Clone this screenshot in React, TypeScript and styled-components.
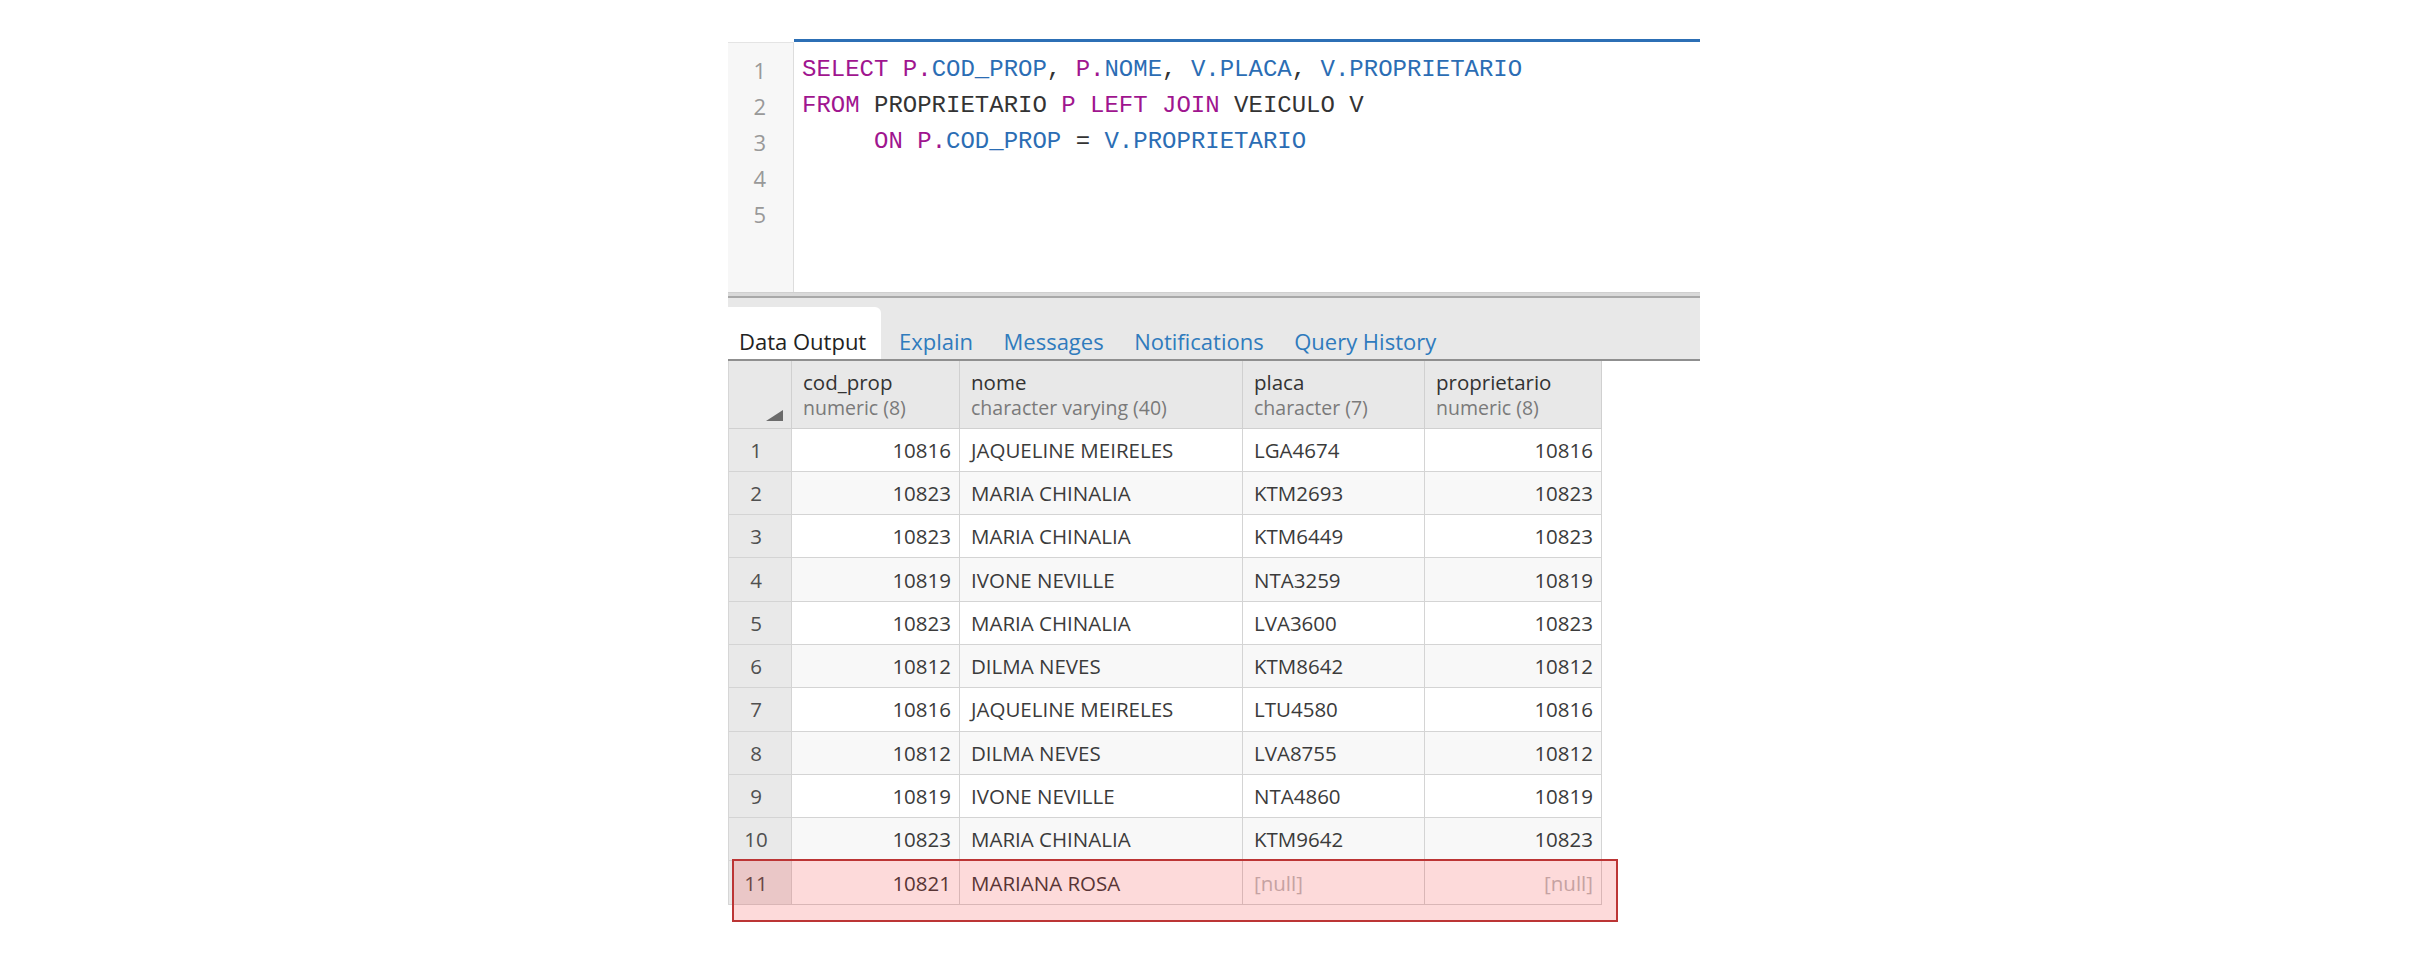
import { FC } from 'react';
import styled, { createGlobalStyle } from 'styled-components';

const GlobalStyle = createGlobalStyle`
  html, body {
    margin: 0;
    padding: 0;
    background: #ffffff;
  }
  body {
    min-height: 964px;
    font-family: 'Open Sans', 'Liberation Sans', sans-serif;
    color: #333333;
  }
`;

const Page = styled.div`
  width: 972px;
  margin: 0 auto;
  padding-top: 39px;
  display: flex;
  flex-direction: column;
`;

const Editor = styled.div`
  display: flex;
  height: 253px;
  background: #ffffff;
`;

const Gutter = styled.div`
  width: 66px;
  margin-top: 3px;
  background: #f7f7f7;
  border-top: 1px solid #e4e4e4;
  border-right: 1px solid #dddddd;
  padding: 9px 27px 0 0;
  box-sizing: border-box;
  display: flex;
  flex-direction: column;
  align-items: flex-end;
`;

const LineNo = styled.div`
  height: 36px;
  line-height: 36px;
  font-family: 'Open Sans', sans-serif;
  font-size: 22px;
  color: #999999;
`;

const Code = styled.div`
  flex: 1;
  border-top: 3px solid #2c6fb5;
  padding: 10px 0 0 8px;
  font-family: 'Liberation Mono', 'DejaVu Sans Mono', monospace;
  font-size: 24px;
  color: #333333;
`;

const CodeLine = styled.div`
  height: 36px;
  line-height: 36px;
  white-space: pre;
`;

const Kw = styled.span`
  color: #a0158f;
`;

const Col = styled.span`
  color: #2b6db4;
`;

const Splitter = styled.div`
  height: 6px;
  background: #d9d9d9;
  border-top: 1px solid #cfcfcf;
  border-bottom: 2px solid #a8a8a8;
  box-sizing: border-box;
`;

const TabBar = styled.div`
  height: 63px;
  background: #e8e8e8;
  border-bottom: 2px solid #8f8f8f;
  box-sizing: border-box;
  display: flex;
  align-items: flex-end;
`;

const Tab = styled.div<{ $active?: boolean }>`
  height: 52px;
  box-sizing: border-box;
  padding: ${(p) => (p.$active ? '19px 14px 0 11px' : '19px 15.5px 0 15px')};
  margin-right: ${(p) => (p.$active ? '3px' : '0')};
  line-height: 30px;
  font-size: 22px;
  white-space: nowrap;
  color: ${(p) => (p.$active ? '#222222' : '#2f7bbd')};
  background: ${(p) => (p.$active ? '#ffffff' : 'transparent')};
  border-top-right-radius: ${(p) => (p.$active ? '6px' : '0')};
  ${(p) => (p.$active ? 'min-width: 153px;' : '')}
`;

const GridWrap = styled.div`
  position: relative;
  align-self: flex-start;
  padding-bottom: 24px;
`;

const Grid = styled.div`
  display: grid;
  grid-template-columns: 63px 168px 283px 182px 177px;
  grid-template-rows: 67.5px repeat(11, 43.3px);
  font-size: 20.5px;
  border-left: 1px solid #d6d6d6;
`;

const HeadCell = styled.div`
  background: #e8e8e8;
  border-right: 1px solid #d0d0d0;
  border-bottom: 1px solid #d0d0d0;
  box-sizing: border-box;
  padding: 8px 11px 0 11px;
  display: flex;
  flex-direction: column;
  position: relative;
`;

const HeadName = styled.div`
  line-height: 26px;
  color: #333333;
  font-size: 20.5px;
  white-space: nowrap;
`;

const HeadType = styled.div`
  line-height: 25px;
  color: #7a7a7a;
  font-size: 19.5px;
  white-space: nowrap;
`;

const SortMark = styled.svg`
  position: absolute;
  right: 8px;
  bottom: 7px;
`;

const Cell = styled.div<{ $num?: boolean; $even?: boolean; $rowNo?: boolean; $null?: boolean }>`
  background: ${(p) => (p.$rowNo ? '#e9e9e9' : p.$even ? '#f8f8f8' : '#ffffff')};
  border-right: 1px solid #d4d4d4;
  border-bottom: 1px solid #d4d4d4;
  box-sizing: border-box;
  display: flex;
  align-items: center;
  justify-content: ${(p) => (p.$rowNo ? 'center' : p.$num ? 'flex-end' : 'flex-start')};
  padding: ${(p) => (p.$rowNo ? '0 8px 0 0' : '0 8px 0 11px')};
  color: ${(p) => (p.$null ? '#bdbdbd' : p.$rowNo ? '#505050' : '#3b3b3b')};
  white-space: nowrap;
  overflow: hidden;
`;

const Highlight = styled.div`
  position: absolute;
  left: 4px;
  top: 498px;
  width: 886px;
  height: 63px;
  box-sizing: border-box;
  border: 2.5px solid #bc3535;
  background: rgba(245, 25, 25, 0.16);
  pointer-events: none;
`;

interface Row {
  cod: string;
  nome: string;
  placa: string | null;
  prop: string | null;
}

const rows: Row[] = [
  { cod: '10816', nome: 'JAQUELINE MEIRELES', placa: 'LGA4674', prop: '10816' },
  { cod: '10823', nome: 'MARIA CHINALIA', placa: 'KTM2693', prop: '10823' },
  { cod: '10823', nome: 'MARIA CHINALIA', placa: 'KTM6449', prop: '10823' },
  { cod: '10819', nome: 'IVONE NEVILLE', placa: 'NTA3259', prop: '10819' },
  { cod: '10823', nome: 'MARIA CHINALIA', placa: 'LVA3600', prop: '10823' },
  { cod: '10812', nome: 'DILMA NEVES', placa: 'KTM8642', prop: '10812' },
  { cod: '10816', nome: 'JAQUELINE MEIRELES', placa: 'LTU4580', prop: '10816' },
  { cod: '10812', nome: 'DILMA NEVES', placa: 'LVA8755', prop: '10812' },
  { cod: '10819', nome: 'IVONE NEVILLE', placa: 'NTA4860', prop: '10819' },
  { cod: '10823', nome: 'MARIA CHINALIA', placa: 'KTM9642', prop: '10823' },
  { cod: '10821', nome: 'MARIANA ROSA', placa: null, prop: null },
];

const columns = [
  { name: 'cod_prop', type: 'numeric (8)' },
  { name: 'nome', type: 'character varying (40)' },
  { name: 'placa', type: 'character (7)' },
  { name: 'proprietario', type: 'numeric (8)' },
];

const tabs = ['Explain', 'Messages', 'Notifications', 'Query History'];

const App: FC = () => {
  return (
    <>
      <GlobalStyle />
      <Page>
        <Editor>
          <Gutter>
            {[1, 2, 3, 4, 5].map((n) => (
              <LineNo key={n}>{n}</LineNo>
            ))}
          </Gutter>
          <Code>
            <CodeLine>
              <Kw>SELECT P.</Kw>
              <Col>COD_PROP</Col>, <Kw>P.</Kw>
              <Col>NOME</Col>, <Col>V.PLACA</Col>, <Col>V.PROPRIETARIO</Col>
            </CodeLine>
            <CodeLine>
              <Kw>FROM</Kw> PROPRIETARIO <Kw>P LEFT JOIN</Kw> VEICULO V
            </CodeLine>
            <CodeLine>
              {'     '}
              <Kw>ON P.</Kw>
              <Col>COD_PROP</Col> = <Col>V.PROPRIETARIO</Col>
            </CodeLine>
            <CodeLine> </CodeLine>
            <CodeLine> </CodeLine>
          </Code>
        </Editor>
        <Splitter />
        <TabBar>
          <Tab $active>Data Output</Tab>
          {tabs.map((t) => (
            <Tab key={t}>{t}</Tab>
          ))}
        </TabBar>
        <GridWrap>
          <Grid>
            <HeadCell>
              <SortMark width="17" height="11" viewBox="0 0 17 11">
                <polygon points="17,0 17,11 0,11" fill="#6b6b6b" />
              </SortMark>
            </HeadCell>
            {columns.map((c) => (
              <HeadCell key={c.name}>
                <HeadName>{c.name}</HeadName>
                <HeadType>{c.type}</HeadType>
              </HeadCell>
            ))}
            {rows.map((r, i) => {
              const even = i % 2 === 1;
              return [
                <Cell key={`n${i}`} $rowNo>
                  {i + 1}
                </Cell>,
                <Cell key={`c${i}`} $num $even={even}>
                  {r.cod}
                </Cell>,
                <Cell key={`m${i}`} $even={even}>
                  {r.nome}
                </Cell>,
                <Cell key={`p${i}`} $even={even} $null={r.placa === null}>
                  {r.placa ?? '[null]'}
                </Cell>,
                <Cell key={`o${i}`} $num $even={even} $null={r.prop === null}>
                  {r.prop ?? '[null]'}
                </Cell>,
              ];
            })}
          </Grid>
          <Highlight />
        </GridWrap>
      </Page>
    </>
  );
};

export default App;
